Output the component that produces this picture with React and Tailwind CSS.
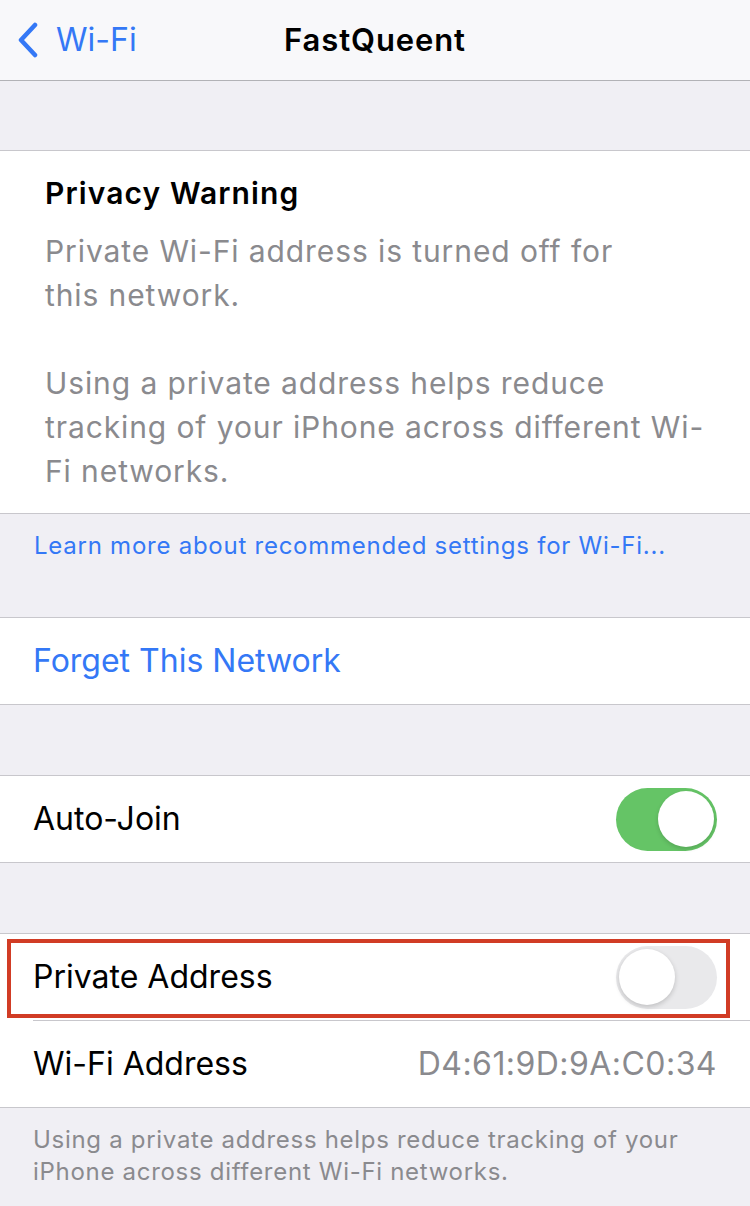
import React from 'react';

const font = { fontFamily: 'Inter, "Liberation Sans", sans-serif' };

function Toggle({ on }) {
  return on ? (
    <div className="w-[101px] h-[63px] rounded-full bg-[#65c466] flex items-center justify-end pr-[3px]">
      <div className="w-[56px] h-[56px] rounded-full bg-white shadow-[0_2px_4px_rgba(0,0,0,0.15)]" />
    </div>
  ) : (
    <div className="w-[101px] h-[63px] rounded-full bg-[#e9e9eb] flex items-center justify-start pl-[3px]">
      <div className="w-[56px] h-[56px] rounded-full bg-white shadow-[0_2px_5px_rgba(0,0,0,0.18)]" />
    </div>
  );
}

export default function App() {
  return (
    <div className="w-[750px] min-h-[1206px] bg-[#f0eff4]" style={font}>
      {/* Nav */}
      <div className="h-[81px] bg-[#f8f8fa] border-b border-[#b2b2b6] relative flex items-center justify-center">
        <div className="absolute left-[16px] top-0 h-[80px] flex items-center gap-[16px]">
          <svg width="24" height="36" viewBox="0 0 24 36" fill="none">
            <path d="M19 3 L5 18 L19 33" stroke="#3478f6" strokeWidth="4.5" strokeLinecap="round" strokeLinejoin="round" />
          </svg>
          <span className="text-[32px] text-[#3478f6]">Wi-Fi</span>
        </div>
        <span className="text-[31px] font-semibold text-black tracking-[0.9px]">FastQueent</span>
      </div>

      <div className="h-[69px]" />

      {/* Privacy warning */}
      <div className="bg-white border-y border-[#c8c7cc] pl-[45px] pr-[30px] pt-[20px] pb-[20px]">
        <div className="text-[30px] leading-[44px] font-semibold text-black tracking-[1.1px]">Privacy Warning</div>
        <div className="mt-[14px] text-[30px] leading-[44px] text-[#8a8a8e] tracking-[0.9px]">
          <p>Private Wi-Fi address is turned off for<br />this network.</p>
          <p className="mt-[44px]">Using a private address helps reduce<br />tracking of your iPhone across different Wi-<br />Fi networks.</p>
        </div>
      </div>

      <div className="h-[103px] pt-[16px] pl-[34px]">
        <p className="text-[24px] leading-[32px] text-[#3478f6] tracking-[0.75px] whitespace-nowrap">Learn more about recommended settings for Wi-Fi...</p>
      </div>

      {/* Forget */}
      <div className="bg-white border-y border-[#c8c7cc] h-[88px] flex items-center pl-[33px]">
        <span className="text-[32px] text-[#3478f6]">Forget This Network</span>
      </div>

      <div className="h-[70px]" />

      {/* Auto-Join */}
      <div className="bg-white border-y border-[#c8c7cc] h-[88px] flex items-center justify-between pl-[33px] pr-[33px]">
        <span className="text-[32px] text-black">Auto-Join</span>
        <Toggle on />
      </div>

      <div className="h-[70px]" />

      {/* Private address group */}
      <div className="bg-white border-y border-[#c8c7cc]">
        <div className="relative h-[86px] flex items-center justify-between pl-[33px] pr-[33px]">
          <span className="text-[32px] text-black">Private Address</span>
          <Toggle on={false} />
          <div className="absolute left-[7px] top-[5px] w-[723px] h-[79px] border-[4px] border-[#d13c25]" />
        </div>
        <div className="ml-[33px] border-t border-[#c8c7cc]" />
        <div className="h-[86px] flex items-center justify-between pl-[33px] pr-[33px]">
          <span className="text-[32px] text-black">Wi-Fi Address</span>
          <span className="text-[32px] text-[#8a8a8e] tracking-[0.45px]">D4:61:9D:9A:C0:34</span>
        </div>
      </div>

      <div className="pt-[16px] pl-[33px] pr-[30px] pb-[20px]">
        <p className="text-[24px] leading-[32px] text-[#8a8a8e] tracking-[0.7px] whitespace-nowrap">
          Using a private address helps reduce tracking of your<br />iPhone across different Wi-Fi networks.
        </p>
      </div>
    </div>
  );
}
